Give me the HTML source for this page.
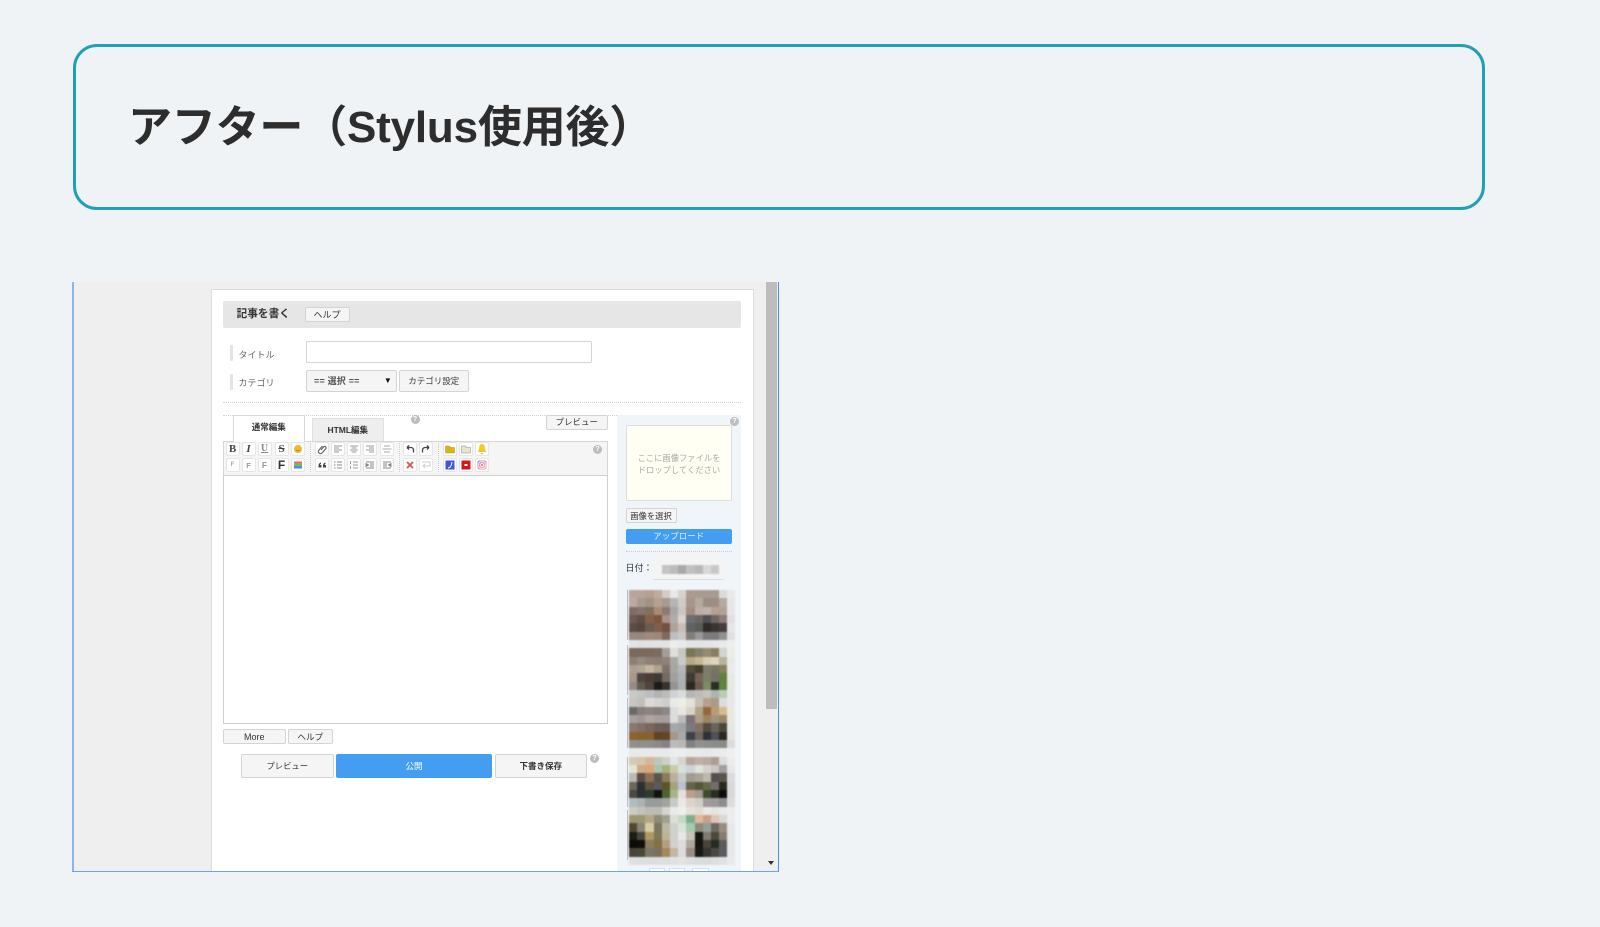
<!DOCTYPE html>
<html lang="ja"><head><meta charset="utf-8"><title>アフター</title>
<style>
*{box-sizing:border-box;margin:0;padding:0}
html,body{width:1600px;height:927px;overflow:hidden;background:#eff3f6;font-family:"Liberation Sans","Noto Sans CJK JP",sans-serif}
.a,.t,.btn,.q,.lb{position:absolute}
#box{left:72.5px;top:44px;width:1412px;height:166px;border:3px solid #209fb6;border-radius:24px}
h1{position:absolute;left:128px;top:97.5px;font-size:44px;line-height:60px;font-weight:700;color:#2d2d2d;white-space:nowrap;letter-spacing:-.2px}
#shot{position:absolute;left:72px;top:282px;width:707px;height:590px;overflow:hidden;background:#efefef}
#in{position:absolute;left:-72.5px;top:-282.3px;width:1600px;height:927px;filter:blur(.35px)}
.btn{background:#f5f5f5;border:1px solid #d4d4d4;border-radius:2px;font-size:8.5px;color:#333;text-align:center;white-space:nowrap;display:flex;align-items:center;justify-content:center}
.lb{font-size:9px;color:#666;white-space:nowrap;line-height:14px}
.q{width:9px;height:9px;border-radius:50%;background:#bdbdbd;color:#fff;font:bold 7px/9px "Liberation Sans",sans-serif;text-align:center}
.t{width:14px;height:14px;background:#fff;border:1px solid #e6e6e6;border-radius:2px;display:flex;align-items:center;justify-content:center;font:bold 10px/12px "Liberation Serif",serif;color:#555}
.t svg{width:12px;height:12px;display:block}
.bar{background:#e4e4e4;width:3px;height:16px;left:230px;border-radius:1px}
.ln{position:absolute;left:627px;width:1px;background:#bdbdbd}
#mos{position:absolute;left:629.5px;top:590.3px;width:106.6px;height:275px;display:grid;grid-template-columns:repeat(13,8.2px);grid-auto-rows:8.34px;filter:blur(.8px)}
#mos i{display:block}
#date{position:absolute;left:662px;top:565px;width:58px;height:9px;display:grid;grid-template-columns:repeat(7,1fr);filter:blur(.7px)}
#date i{display:block}
</style></head><body>
<div class="a" id="box"></div>
<h1>アフター（Stylus使用後）</h1>

<div id="shot"><div id="in">
<div class="a" style="left:211px;top:289px;width:543.5px;height:600px;background:#fff;border:1px solid #dcdcdc"></div>
<div class="a" style="left:223.5px;top:301px;width:518px;height:27px;background:#e6e6e6;border-radius:2px"></div>
<div class="lb" style="left:237px;top:307.5px;font-size:10.7px;font-weight:700;color:#333">記事を書く</div>
<div class="btn" style="left:305px;top:307.5px;width:45px;height:15px;font-size:9px">ヘルプ</div>

<div class="a bar" style="top:345px"></div><div class="lb" style="left:239px;top:348px">タイトル</div>
<div class="a" style="left:306.5px;top:341px;width:285.5px;height:22.5px;background:#fff;border:1px solid #d4d4d4;border-radius:2px"></div>
<div class="a bar" style="top:374px"></div><div class="lb" style="left:239px;top:376.5px">カテゴリ</div>
<div class="btn" style="left:306.5px;top:370px;width:90.5px;height:22.5px;justify-content:flex-start;padding-left:7px;font-size:9px;letter-spacing:.2px;font-weight:700;color:#555">== 選択 ==<span style="position:absolute;right:3.5px;font-size:8px;color:#111">▼</span></div>
<div class="btn" style="left:399.5px;top:370px;width:69.5px;height:22.5px">カテゴリ設定</div>
<div class="a" style="left:223.5px;top:402px;width:518px;border-top:1px dotted #d2d2d2"></div>
<div class="a" style="left:223.5px;top:415px;width:394px;border-top:1px dotted #d2d2d2"></div>

<div class="a" style="left:233px;top:415px;width:72.5px;height:27px;background:#fff;border:1px solid #d8d8d8;border-bottom:0;z-index:2;text-align:center;font-size:8.5px;font-weight:700;line-height:23px;color:#333">通常編集</div>
<div class="a" style="left:312px;top:418px;width:72.5px;height:23px;background:#eee;border:1px solid #e0e0e0;border-bottom:0;text-align:center;font-size:8.5px;font-weight:700;line-height:22px;color:#333">HTML編集</div>
<div class="q" style="left:411px;top:415px">?</div>
<div class="btn" style="left:546.5px;top:415px;width:61.5px;height:15px">プレビュー</div>

<div class="a" style="left:223.5px;top:441px;width:384.5px;height:34.5px;background:#f5f5f5;border:1px solid #d6d6d6;border-bottom:0"></div>
<div class="a" style="left:223.5px;top:475px;width:384.5px;height:249px;background:#fff;border:1px solid #cfcfcf"></div>
<div class="a" style="left:310px;top:443px;height:29px;border-left:1px dotted #ccc"></div>
<div class="a" style="left:399px;top:443px;height:29px;border-left:1px dotted #ccc"></div>
<div class="a" style="left:438px;top:443px;height:29px;border-left:1px dotted #ccc"></div>
<div class="q" style="left:593.5px;top:445px">?</div>

<div class="t" style="left:226px;top:442.5px;font-size:11px;color:#444">B</div>
<div class="t" style="left:242px;top:442.5px;font-style:italic;font-size:11px;color:#444">I</div>
<div class="t" style="left:258px;top:442.5px;text-decoration:underline;color:#888">U</div>
<div class="t" style="left:275px;top:442.5px;text-decoration:line-through;font-size:11px;color:#444">S</div>
<div class="t" style="left:291px;top:442.5px"><svg viewBox="0 0 12 12"><circle cx="6" cy="6" r="4" fill="#f2b632"/><path d="M4 7.5h4" stroke="#b98a20"/></svg></div>
<div class="t" style="left:226px;top:458.5px;font:bold 6px 'Liberation Sans';color:#aaa">F</div>
<div class="t" style="left:242px;top:458.5px;font:bold 7.5px 'Liberation Sans';color:#999">F</div>
<div class="t" style="left:258px;top:458.5px;font:bold 8.5px 'Liberation Sans';color:#999">F</div>
<div class="t" style="left:275px;top:458.5px;font:bold 12px 'Liberation Sans';color:#333">F</div>
<div class="t" style="left:291px;top:458.5px"><svg viewBox="0 0 12 12"><path d="M2 2.500h8v2.300H2z" fill="#f0645a"/><path d="M2 4.800h8v2.300H2z" fill="#6fc04e"/><path d="M2 7.100h8v2.400H2z" fill="#3f8bef"/></svg></div>

<div class="t" style="left:315px;top:442.5px"><svg viewBox="0 0 12 12" fill="none" stroke="#666" stroke-width="1.2"><path d="M5 7l3-3.5a1.500 1.500 0 0 1 2 2L6 10a2 2 0 0 1-3-3l3.500-4"/></svg></div>
<div class="t" style="left:331px;top:442.5px"><svg viewBox="0 0 12 12" stroke="#999"><path d="M2 3h8M2 5h5M2 7h8M2 9h5"/></svg></div>
<div class="t" style="left:347px;top:442.5px"><svg viewBox="0 0 12 12" stroke="#999"><path d="M2 3h8M3.500 5h5M2 7h8M3.500 9h5"/></svg></div>
<div class="t" style="left:363px;top:442.5px"><svg viewBox="0 0 12 12" stroke="#999"><path d="M2 3h8M5 5h5M2 7h8M5 9h5"/></svg></div>
<div class="t" style="left:380px;top:442.5px"><svg viewBox="0 0 12 12" stroke="#aaa"><path d="M3 3h6M1.500 6h9M3 9h6"/></svg></div>
<div class="t" style="left:315px;top:458.5px"><svg viewBox="0 0 12 12" fill="#444"><path d="M2.500 8.500V6.500C2.500 5 3.500 3.800 5 3.500v1.300c-.6.200-.9.600-.9 1.200H5.500v2.500zM7 8.500V6.500C7 5 8 3.800 9.500 3.500v1.300c-.6.200-.9.600-.9 1.200H10v2.500z"/></svg></div>
<div class="t" style="left:331px;top:458.5px"><svg viewBox="0 0 12 12" stroke="#888"><path d="M2 3h1.500M2 6h1.500M2 9h1.500M5 3h5M5 6h5M5 9h5"/></svg></div>
<div class="t" style="left:347px;top:458.5px"><svg viewBox="0 0 12 12" stroke="#999"><path d="M2.500 2v3M2.500 7v3M5 3h5M5 6h5M5 9h5"/></svg></div>
<div class="t" style="left:363px;top:458.5px"><svg viewBox="0 0 12 12" stroke="#888"><path d="M2 3h8M6 5h4M6 7h4M2 9h8"/><path d="M2 4.500L4.500 6 2 7.500z" fill="#888"/></svg></div>
<div class="t" style="left:380px;top:458.5px"><svg viewBox="0 0 12 12" stroke="#888"><path d="M2 3h8M2 5h4M2 7h4M2 9h8"/><path d="M10 4.500L7.500 6 10 7.500z" fill="#888"/></svg></div>

<div class="t" style="left:403px;top:442.5px"><svg viewBox="0 0 12 12" fill="none" stroke="#444" stroke-width="1.300"><path d="M9.500 9.500V7a2.500 2.500 0 0 0-2.500-2.500H3"/><path d="M3 4.500l2-2M3 4.500l2 2"/></svg></div>
<div class="t" style="left:419px;top:442.5px"><svg viewBox="0 0 12 12" fill="none" stroke="#444" stroke-width="1.300"><path d="M2.500 9.500V7A2.500 2.500 0 0 1 5 4.500h4"/><path d="M9 4.500l-2-2M9 4.500l-2 2"/></svg></div>
<div class="t" style="left:403px;top:458.5px"><svg viewBox="0 0 12 12" stroke="#d9534f" stroke-width="1.800"><path d="M3 3l6 6M9 3l-6 6"/></svg></div>
<div class="t" style="left:419px;top:458.5px"><svg viewBox="0 0 12 12" fill="none" stroke="#ccc"><path d="M2 3h8v4H3M5 5L3 7l2 2"/></svg></div>

<div class="t" style="left:443px;top:442.5px"><svg viewBox="0 0 12 12"><path d="M1.500 3h4l1 1.500h4V10h-9z" fill="#d9b51c" stroke="#b8960f" stroke-width=".5"/></svg></div>
<div class="t" style="left:459px;top:442.5px"><svg viewBox="0 0 12 12"><path d="M1.500 3h4l1 1.500h4V10h-9z" fill="#e8e2cf" stroke="#aaa" stroke-width=".7"/></svg></div>
<div class="t" style="left:475px;top:442.5px"><svg viewBox="0 0 12 12"><path d="M6 1c2 0 2.800 1.500 2.800 3.500 0 2 1 3.500 1.500 4.500H1.700c.5-1 1.500-2.500 1.500-4.500C3.200 2.500 4 1 6 1zM5 10h2v1.200H5z" fill="#f4c92c"/></svg></div>
<div class="t" style="left:443px;top:458.5px"><svg viewBox="0 0 12 12"><path d="M1.500 1.500h9v9h-9z" fill="#3f55dc"/><path d="M4 9c2 0 3.500-2 4-6" stroke="#fff" fill="none"/></svg></div>
<div class="t" style="left:459px;top:458.5px"><svg viewBox="0 0 12 12"><path d="M1.500 1.500h9v9h-9z" fill="#d01818"/><path d="M4.500 5h3v2h-3z" fill="#fff"/></svg></div>
<div class="t" style="left:475px;top:458.5px"><svg viewBox="0 0 12 12"><defs><linearGradient id="ig" x1="0" y1="0" x2="1" y2="1"><stop offset="0" stop-color="#a87fd8"/><stop offset=".55" stop-color="#ee8aa0"/><stop offset="1" stop-color="#f5c070"/></linearGradient></defs><rect x="1.500" y="1.500" width="9" height="9" rx="2" fill="url(#ig)"/><rect x="2.800" y="2.800" width="6.400" height="6.400" rx="1.500" fill="none" stroke="#fff" stroke-width=".8"/><circle cx="6" cy="6" r="1.600" fill="none" stroke="#fff" stroke-width=".8"/></svg></div>

<div class="btn" style="left:223.5px;top:729.5px;width:62.5px;height:15px;font-size:9px">More</div>
<div class="btn" style="left:288.5px;top:729.5px;width:44.5px;height:15px;font-size:8.6px">ヘルプ</div>
<div class="btn" style="left:241.5px;top:754.5px;width:92.5px;height:23.5px;font-size:8.3px">プレビュー</div>
<div class="btn" style="left:336.5px;top:754.5px;width:156px;height:23.5px;background:#439df0;border-color:#439df0;color:#fff;font-size:8.5px">公開</div>
<div class="btn" style="left:495px;top:754.5px;width:92.5px;height:23.5px;font-size:8.5px;font-weight:700">下書き保存</div>
<div class="q" style="left:590.5px;top:754.5px">?</div>

<div class="a" style="left:617.5px;top:415px;width:124px;height:460px;background:#f0f5f9"></div>
<div class="q" style="left:730.5px;top:417px">?</div>
<div class="a" style="left:626.5px;top:425px;width:106px;height:76px;background:#fffff3;border:1px solid #ddd;border-radius:2px;color:#aaa;font-size:8.3px;line-height:12px;text-align:center;padding-top:26.5px;white-space:nowrap">ここに画像ファイルを<br>ドロップしてください</div>
<div class="btn" style="left:626px;top:508.5px;width:51px;height:15px;font-size:8.3px">画像を選択</div>
<div class="btn" style="left:626px;top:529px;width:106.5px;height:15px;background:#439df0;border-color:#439df0;color:#e4f0fc;font-size:8.5px">アップロード</div>
<div class="a" style="left:626px;top:551px;width:106.5px;border-top:1px dotted #ccc"></div>
<div class="lb" style="left:626px;top:561px;font-size:9px;color:#333">日付：</div>
<div class="a" style="left:653px;top:557px;width:71px;height:23px;background:#f4f4f4;border-bottom:1px solid #ddd"></div>
<div id="date"><i style="background:#c4c4c4"></i><i style="background:#bcbcbc"></i><i style="background:#a8a8a8"></i><i style="background:#c0c0c0"></i><i style="background:#b8b8b8"></i><i style="background:#d8d8d8"></i><i style="background:#c8c8c8"></i></div>

<div class="ln" style="top:590px;height:50px"></div>
<div class="ln" style="top:645px;height:50px"></div>
<div class="ln" style="top:698px;height:50px"></div>
<div class="ln" style="top:757px;height:50px"></div>
<div class="ln" style="top:810px;height:50px"></div>
<div id="mos">
<i style="background:#b8a49a"></i><i style="background:#b8a49a"></i><i style="background:#b5a093"></i><i style="background:#c0aa9e"></i><i style="background:#d3cdc9"></i><i style="background:#e8e8e8"></i><i style="background:#d5d3ce"></i><i style="background:#ab9c93"></i><i style="background:#a89a90"></i><i style="background:#a89a90"></i><i style="background:#a69a92"></i><i style="background:#dcdada"></i><i style="background:#eaeaea"></i>
<i style="background:#bda99e"></i><i style="background:#aa9a8c"></i><i style="background:#a39383"></i><i style="background:#b8a08f"></i><i style="background:#a69a92"></i><i style="background:#b5b5b5"></i><i style="background:#cfccc6"></i><i style="background:#a8968c"></i><i style="background:#b5a99e"></i><i style="background:#9d8e83"></i><i style="background:#9d8e83"></i><i style="background:#b8a89f"></i><i style="background:#e6e6e6"></i>
<i style="background:#7f6d63"></i><i style="background:#85756c"></i><i style="background:#82705f"></i><i style="background:#a88c78"></i><i style="background:#8c7a72"></i><i style="background:#a9a7a5"></i><i style="background:#ccc6c2"></i><i style="background:#a28d80"></i><i style="background:#bcaea5"></i><i style="background:#bfb2a8"></i><i style="background:#b6a28f"></i><i style="background:#b3a094"></i><i style="background:#e6e6e6"></i>
<i style="background:#6e5a50"></i><i style="background:#5f4f45"></i><i style="background:#86604a"></i><i style="background:#80553e"></i><i style="background:#a89289"></i><i style="background:#b0aca8"></i><i style="background:#d8d5cc"></i><i style="background:#6b6f70"></i><i style="background:#6b6663"></i><i style="background:#524f50"></i><i style="background:#6e6662"></i><i style="background:#8b7c7a"></i><i style="background:#e0e0e0"></i>
<i style="background:#5a4e46"></i><i style="background:#56473e"></i><i style="background:#6b5c50"></i><i style="background:#7f5f4c"></i><i style="background:#73513f"></i><i style="background:#ada39b"></i><i style="background:#c9bdb5"></i><i style="background:#5f6364"></i><i style="background:#5b5b58"></i><i style="background:#2e2b2b"></i><i style="background:#3a3533"></i><i style="background:#463c3a"></i><i style="background:#e6e6e6"></i>
<i style="background:#96877f"></i><i style="background:#96867e"></i><i style="background:#9f8a7c"></i><i style="background:#9d8878"></i><i style="background:#7c6a60"></i><i style="background:#bfbfbf"></i><i style="background:#c8c8c8"></i><i style="background:#807e7a"></i><i style="background:#9a9896"></i><i style="background:#7c7a7a"></i><i style="background:#7c7a7a"></i><i style="background:#929090"></i><i style="background:#e0e0e0"></i>
<i style="background:#e2e5e5"></i><i style="background:#e0e2e2"></i><i style="background:#e2e2e2"></i><i style="background:#e2e4e4"></i><i style="background:#e2e4e4"></i><i style="background:#ebedee"></i><i style="background:#e8eaeb"></i><i style="background:#e4e6e6"></i><i style="background:#e2e4e4"></i><i style="background:#e4e6e6"></i><i style="background:#e6e8e8"></i><i style="background:#e8eaea"></i><i style="background:#eceeee"></i>
<i style="background:#7a6a5c"></i><i style="background:#7a6a5c"></i><i style="background:#7a6a5c"></i><i style="background:#7d6c5e"></i><i style="background:#a49e98"></i><i style="background:#dfdfdd"></i><i style="background:#c7c8c2"></i><i style="background:#7a7557"></i><i style="background:#85806a"></i><i style="background:#948c72"></i><i style="background:#8a7e62"></i><i style="background:#d3d3cf"></i><i style="background:#ecece8"></i>
<i style="background:#8e7f74"></i><i style="background:#978a80"></i><i style="background:#8f8076"></i><i style="background:#8d7e74"></i><i style="background:#8e8379"></i><i style="background:#aaa7a3"></i><i style="background:#cacbc4"></i><i style="background:#b5a886"></i><i style="background:#c5b694"></i><i style="background:#d6cdb3"></i><i style="background:#dfd4bd"></i><i style="background:#b5b29e"></i><i style="background:#e9e9e6"></i>
<i style="background:#ad9f90"></i><i style="background:#b0a494"></i><i style="background:#c4b4a0"></i><i style="background:#b0a08e"></i><i style="background:#7f7369"></i><i style="background:#a8a6a4"></i><i style="background:#b4b6b8"></i><i style="background:#544d38"></i><i style="background:#45402d"></i><i style="background:#7d7c6a"></i><i style="background:#757562"></i><i style="background:#86805f"></i><i style="background:#ececea"></i>
<i style="background:#a8988a"></i><i style="background:#4f4540"></i><i style="background:#4a3c36"></i><i style="background:#3f3a36"></i><i style="background:#756a62"></i><i style="background:#a0a0a0"></i><i style="background:#aeb0b2"></i><i style="background:#3d3b33"></i><i style="background:#77625a"></i><i style="background:#7c7e66"></i><i style="background:#75706a"></i><i style="background:#5f8140"></i><i style="background:#e8e8e4"></i>
<i style="background:#958a86"></i><i style="background:#645a50"></i><i style="background:#4f443f"></i><i style="background:#1c1a16"></i><i style="background:#36332f"></i><i style="background:#969392"></i><i style="background:#aeafaf"></i><i style="background:#2a2620"></i><i style="background:#6a5a52"></i><i style="background:#7e8a66"></i><i style="background:#2a2e24"></i><i style="background:#5d8540"></i><i style="background:#e8e8e4"></i>
<i style="background:#c8c8c6"></i><i style="background:#c4c4c2"></i><i style="background:#bebebe"></i><i style="background:#b2b4b4"></i><i style="background:#bcbcbc"></i><i style="background:#d0d2d4"></i><i style="background:#d8dcdc"></i><i style="background:#b5b5b5"></i><i style="background:#bcbcba"></i><i style="background:#c4c4bc"></i><i style="background:#abb4b0"></i><i style="background:#b8ccb0"></i><i style="background:#e6e8e6"></i>
<i style="background:#c8c4c0"></i><i style="background:#c2beba"></i><i style="background:#dcdad8"></i><i style="background:#d6d4d2"></i><i style="background:#d0cecc"></i><i style="background:#eaeaea"></i><i style="background:#eeeee8"></i><i style="background:#e2e2d6"></i><i style="background:#c4c0b4"></i><i style="background:#b8a090"></i><i style="background:#ae9a88"></i><i style="background:#dcdcdc"></i><i style="background:#e8e8e8"></i>
<i style="background:#6a6a66"></i><i style="background:#86807c"></i><i style="background:#8c8480"></i><i style="background:#867e7a"></i><i style="background:#8e8884"></i><i style="background:#dcdcdc"></i><i style="background:#e8e8e0"></i><i style="background:#d8d4c4"></i><i style="background:#b0a488"></i><i style="background:#94683c"></i><i style="background:#b89c74"></i><i style="background:#d4ba92"></i><i style="background:#ece8e0"></i>
<i style="background:#a89e9c"></i><i style="background:#a09694"></i><i style="background:#aea4a2"></i><i style="background:#a89e9c"></i><i style="background:#a49e9c"></i><i style="background:#dcdcdc"></i><i style="background:#bcbcba"></i><i style="background:#7c7276"></i><i style="background:#ac9c88"></i><i style="background:#9c8660"></i><i style="background:#9e9484"></i><i style="background:#9a8868"></i><i style="background:#ece8e0"></i>
<i style="background:#8c766e"></i><i style="background:#84706a"></i><i style="background:#7a665e"></i><i style="background:#6e5e58"></i><i style="background:#6a5c58"></i><i style="background:#a4a8a8"></i><i style="background:#a0a4a4"></i><i style="background:#7a7a80"></i><i style="background:#84705e"></i><i style="background:#544c3e"></i><i style="background:#68645c"></i><i style="background:#4c4838"></i><i style="background:#e6e6e2"></i>
<i style="background:#8c6430"></i><i style="background:#86622e"></i><i style="background:#84622e"></i><i style="background:#5e4424"></i><i style="background:#644624"></i><i style="background:#a8968a"></i><i style="background:#a8a8a8"></i><i style="background:#3e4248"></i><i style="background:#6e6660"></i><i style="background:#2e3238"></i><i style="background:#4c5058"></i><i style="background:#2a2820"></i><i style="background:#e4e4e0"></i>
<i style="background:#92908e"></i><i style="background:#8e8e8c"></i><i style="background:#8e8e8e"></i><i style="background:#8a8a8a"></i><i style="background:#84808a"></i><i style="background:#bcbcbc"></i><i style="background:#b8b8b8"></i><i style="background:#808280"></i><i style="background:#909290"></i><i style="background:#8e8e8e"></i><i style="background:#8c8c8c"></i><i style="background:#8a8a8a"></i><i style="background:#dcdcdc"></i>
<i style="background:#e8eaea"></i><i style="background:#e8eaea"></i><i style="background:#e8eaea"></i><i style="background:#e8eaea"></i><i style="background:#e8eaea"></i><i style="background:#eceeee"></i><i style="background:#eceeee"></i><i style="background:#e8eaea"></i><i style="background:#e8eaea"></i><i style="background:#e8eaea"></i><i style="background:#e8eaea"></i><i style="background:#eaecec"></i><i style="background:#eef0f0"></i>
<i style="background:#d4cbb4"></i><i style="background:#d8c4ac"></i><i style="background:#d4b89e"></i><i style="background:#c0c6b8"></i><i style="background:#ccd0c8"></i><i style="background:#e4e4e4"></i><i style="background:#d8d4d0"></i><i style="background:#b8a69a"></i><i style="background:#c0b0a4"></i><i style="background:#b8aca0"></i><i style="background:#ac9e90"></i><i style="background:#dcdcdc"></i><i style="background:#ececec"></i>
<i style="background:#e4e4d4"></i><i style="background:#cfab8a"></i><i style="background:#dca478"></i><i style="background:#a8c4b0"></i><i style="background:#a0b478"></i><i style="background:#c8cca4"></i><i style="background:#d8e0d8"></i><i style="background:#ccd4d8"></i><i style="background:#dde4dc"></i><i style="background:#d4d0cc"></i><i style="background:#ccc4c0"></i><i style="background:#a0a0a0"></i><i style="background:#e8e8e8"></i>
<i style="background:#bcb8b4"></i><i style="background:#5c4c44"></i><i style="background:#8c7058"></i><i style="background:#5a544c"></i><i style="background:#8c7c5c"></i><i style="background:#bcae9c"></i><i style="background:#c4ccc8"></i><i style="background:#a09c94"></i><i style="background:#a8a49c"></i><i style="background:#bcb8ac"></i><i style="background:#585050"></i><i style="background:#5a544c"></i><i style="background:#dcdcdc"></i>
<i style="background:#6c6858"></i><i style="background:#2c3034"></i><i style="background:#5e5240"></i><i style="background:#5c5a5e"></i><i style="background:#5a5628"></i><i style="background:#a4a47c"></i><i style="background:#bcc0d4"></i><i style="background:#64644c"></i><i style="background:#545638"></i><i style="background:#66684c"></i><i style="background:#746c6c"></i><i style="background:#282820"></i><i style="background:#d8d8d8"></i>
<i style="background:#4c4844"></i><i style="background:#2c3034"></i><i style="background:#2c3c2c"></i><i style="background:#101410"></i><i style="background:#4c6430"></i><i style="background:#a8b488"></i><i style="background:#e4e0dc"></i><i style="background:#bc9e8a"></i><i style="background:#a49890"></i><i style="background:#3e4c2c"></i><i style="background:#2a2c24"></i><i style="background:#0c0c0c"></i><i style="background:#d8d8d8"></i>
<i style="background:#b0bcbc"></i><i style="background:#aab4b4"></i><i style="background:#989c9a"></i><i style="background:#989c98"></i><i style="background:#a0a49c"></i><i style="background:#c8cac6"></i><i style="background:#ece8e4"></i><i style="background:#dcd4cc"></i><i style="background:#d0ccc8"></i><i style="background:#a09c9c"></i><i style="background:#9a9898"></i><i style="background:#8c8c8c"></i><i style="background:#dcdcdc"></i>
<i style="background:#ccccc4"></i><i style="background:#c4c4bc"></i><i style="background:#bcbcb4"></i><i style="background:#bcbcb4"></i><i style="background:#d4d4d0"></i><i style="background:#e8eaea"></i><i style="background:#ecf0ec"></i><i style="background:#e4e0d8"></i><i style="background:#dcdcd4"></i><i style="background:#e8e8e4"></i><i style="background:#e4e4e0"></i><i style="background:#e8e8e8"></i><i style="background:#ececec"></i>
<i style="background:#9c9870"></i><i style="background:#9c9870"></i><i style="background:#b4a884"></i><i style="background:#8c8c78"></i><i style="background:#a0a090"></i><i style="background:#dcdfd8"></i><i style="background:#c4d8c8"></i><i style="background:#7cb088"></i><i style="background:#e4b898"></i><i style="background:#cca088"></i><i style="background:#e0c4b8"></i><i style="background:#d8d8d4"></i><i style="background:#ececec"></i>
<i style="background:#504830"></i><i style="background:#8c8474"></i><i style="background:#d8cca0"></i><i style="background:#7c7460"></i><i style="background:#bcb8a0"></i><i style="background:#d0d0cc"></i><i style="background:#d8e4d8"></i><i style="background:#a8c8b0"></i><i style="background:#8c8c80"></i><i style="background:#94a098"></i><i style="background:#6c6a66"></i><i style="background:#9c8c80"></i><i style="background:#e8e8e8"></i>
<i style="background:#1c1c14"></i><i style="background:#48463a"></i><i style="background:#b09860"></i><i style="background:#7c7858"></i><i style="background:#bcb498"></i><i style="background:#d0d0cc"></i><i style="background:#e8e8e4"></i><i style="background:#c8c4bc"></i><i style="background:#141410"></i><i style="background:#807a70"></i><i style="background:#4c483c"></i><i style="background:#887c70"></i><i style="background:#e8e8e8"></i>
<i style="background:#0c0c08"></i><i style="background:#100c08"></i><i style="background:#8c7c5c"></i><i style="background:#847040"></i><i style="background:#b4a080"></i><i style="background:#d4d0cc"></i><i style="background:#dcdcdc"></i><i style="background:#b0a8a0"></i><i style="background:#141410"></i><i style="background:#48443c"></i><i style="background:#282824"></i><i style="background:#5c5c5c"></i><i style="background:#e8e8e8"></i>
<i style="background:#48443a"></i><i style="background:#4c4838"></i><i style="background:#7c7464"></i><i style="background:#7c705c"></i><i style="background:#a08c58"></i><i style="background:#c4b8a0"></i><i style="background:#dcdcdc"></i><i style="background:#988c84"></i><i style="background:#181814"></i><i style="background:#383430"></i><i style="background:#4c4844"></i><i style="background:#5c5c60"></i><i style="background:#e8e8e8"></i>
<i style="background:#e0e0e0"></i><i style="background:#dcdedf"></i><i style="background:#dcdedf"></i><i style="background:#dcdedf"></i><i style="background:#dcdedf"></i><i style="background:#e0e2e2"></i><i style="background:#e2e4e4"></i><i style="background:#dcdedf"></i><i style="background:#d8dcdc"></i><i style="background:#d8dcdc"></i><i style="background:#dcdedf"></i><i style="background:#e0e2e2"></i><i style="background:#e8eaec"></i>
</div>

<div class="a" style="left:649px;top:868px;width:16px;height:8px;background:#fff;border:1px solid #ddd"></div>
<div class="a" style="left:669px;top:868px;width:16px;height:8px;background:#fff;border:1px solid #ddd"></div>
<div class="a" style="left:692px;top:868px;width:17px;height:8px;background:#fff;border:1px solid #ddd"></div>

<div class="a" style="left:766.5px;top:282px;width:10.5px;height:427px;background:#bdbdbd"></div>
<svg class="a" style="left:767.5px;top:860px" width="8" height="6" viewBox="0 0 8 6"><path d="M1 1h6L4 5z" fill="#333"/></svg>
</div>
<div class="a" style="left:0;top:0;width:1.5px;height:590px;background:#8ab4ec"></div>
<div class="a" style="right:0;top:0;width:1.2px;height:590px;background:#4a90e2"></div>
<div class="a" style="left:0;bottom:0;width:707px;height:1.2px;background:#6ea3e6"></div>
</div>
</body></html>
